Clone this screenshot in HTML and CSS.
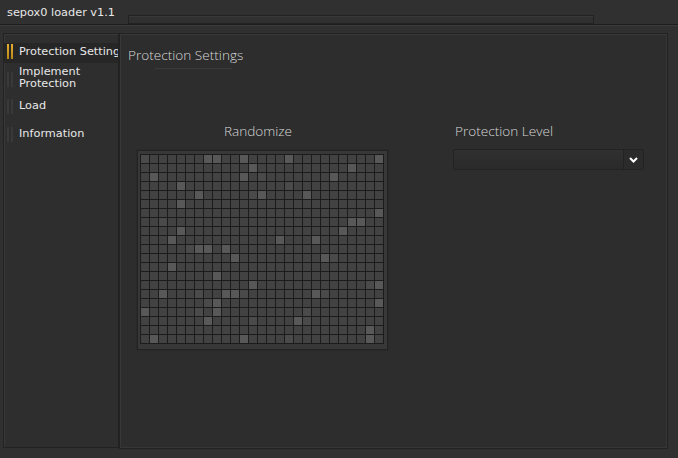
FILE: index.html
```html
<!DOCTYPE html>
<html>
<head>
<meta charset="utf-8">
<title>sepox0 loader v1.1</title>
<link rel="stylesheet" href="styles.css">
</head>
<body>
<div class="app">
  <header class="titlebar">
    <span class="title">sepox0 loader v1.1</span>
    <div class="title-groove"></div>
  </header>
  <div class="content">
    <nav class="sidebar">
      <div class="tab active"><span class="bars"><i></i><i></i></span><span class="tab-label">Protection Setting</span></div>
      <div class="tab tall"><span class="bars"><i></i><i></i></span><span class="tab-label">Implement Protection</span></div>
      <div class="tab"><span class="bars"><i></i><i></i></span><span class="tab-label">Load</span></div>
      <div class="tab"><span class="bars"><i></i><i></i></span><span class="tab-label">Information</span></div>
    </nav>
    <main class="panel">
      <h1 class="panel-title">Protection Settings</h1>
      <div class="panel-rule"></div>
      <div class="columns">
        <section class="randomize">
          <div class="label label-center">Randomize</div>
          <div class="grid-frame"><div class="grid" id="grid"></div></div>
        </section>
        <section class="level">
          <div class="label label-left">Protection Level</div>
          <div class="combo">
            <span class="combo-field"></span>
            <span class="combo-btn"><svg width="9" height="6" viewBox="0 0 9 6"><path d="M1 1 L4.5 4.5 L8 1" fill="none" stroke="#ffffff" stroke-width="2"/></svg></span>
          </div>
        </section>
      </div>
    </main>
  </div>
</div>
<script src="app.js"></script>
</body>
</html>
```

FILE: styles.css
```css
* { box-sizing: border-box; }
html, body { margin: 0; padding: 0; }
body {
  background: #303030;
  font-family: "DejaVu Sans", Verdana, sans-serif;
  font-size: 11.3px;
  color: #e8e8e8;
  overflow: hidden;
}
.app { display: flex; flex-direction: column; width: 678px; height: 458px; }

.titlebar {
  display: flex;
  align-items: flex-start;
  height: 26px;
  border-bottom: 1px solid #3a3a3a;
  box-shadow: inset 0 -1px 0 #1e1e1e;
}
.title { margin: 6px 0 0 7px; line-height: 14px; white-space: nowrap; }
.title-groove {
  margin: 15px 0 0 13px;
  width: 466px;
  height: 9px;
  border: 1px solid #222222;
  box-shadow: inset 0 1px 0 #383838;
}

.content { display: flex; padding: 7px 0 0 3px; }

.sidebar {
  width: 116px;
  height: 415px;
  background: #2e2e2e;
  border: 1px solid #222222;
  box-shadow: inset 1px 1px 0 #383838;
  padding-top: 9px;
  display: flex;
  flex-direction: column;
}
.tab { display: flex; align-items: center; padding-left: 3px; line-height: 16px; }
.tab + .tab { margin-top: 12px; }
.tab.tall { margin-top: 3px; line-height: 12px; }
.tab.tall + .tab { margin-top: 8px; }
.tab.tall .bars { align-self: flex-start; margin-top: 6px; }
.tab.active { background: #262626; padding-top: 1px; padding-bottom: 4px; line-height: 14px; }
.tab.active .tab-label { white-space: nowrap; overflow: hidden; }
.bars { display: flex; gap: 2px; flex: none; margin-right: 6px; }
.bars i { display: block; width: 2px; height: 15px; background: #393939; }
.tab.active .bars i { background: linear-gradient(#e6ad2e, #b98619); }
.tab-label { flex: 1; min-width: 0; }

.panel {
  width: 549px;
  height: 416px;
  background: #2d2d2d;
  border: 1px solid #222222;
  box-shadow: inset 1px 1px 0 #383838, inset -1px -1px 0 #363636;
  padding-left: 8px;
}
.panel-title {
  margin: 13px 0 0 0;
  font-family: "Open Sans", sans-serif;
  font-weight: 300;
  font-size: 13.6px;
  line-height: 16px;
  color: #d6d6d6;
}
.panel-rule { margin: 5px 0 0 27px; width: 77px; height: 1px; background: #3a3a3a; }

.columns { display: flex; align-items: flex-start; margin-top: 54px; padding-left: 9px; gap: 65px; }
.label {
  font-family: "Open Sans", sans-serif;
  font-weight: 300;
  font-size: 13.6px;
  line-height: 16px;
  color: #d6d6d6;
}
.label-center { text-align: center; padding-right: 9px; }
.label-left { padding-left: 2px; }

.randomize { width: 251px; }
.grid-frame {
  margin-top: 11px;
  width: 251px;
  height: 200px;
  border: 1px solid #222222;
  background: #383838;
  padding: 3px 3px 5px 2px;
  box-shadow: 0 0 0 1px #2a2a2a;
}
.grid {
  display: grid;
  grid-template-columns: repeat(27, 8px);
  grid-auto-rows: 8px;
  gap: 1px;
  padding: 1px;
  width: 244px;
  background: #1c1c1c;
}
.cell { background: #424242; }
.cell.mid { background: #4a4a4a; }
.cell.lit { background: #585858; }

.level { width: 191px; }
.combo {
  margin-top: 10px;
  display: flex;
  width: 191px;
  height: 21px;
  border: 1px solid #232323;
  border-radius: 2px;
  background: linear-gradient(#303030, #2a2a2a);
}
.combo-field { flex: 1; }
.combo-btn {
  width: 20px;
  border-left: 1px solid #222222;
  display: flex;
  align-items: center;
  justify-content: center;
  background: #2b2b2b;
}
```

FILE: app.js
```js
(function () {
  var lit = {
    0: { 0: 'mid', 7: 'lit', 8: 'lit', 11: 'lit', 16: 'lit', 26: 'lit' },
    1: { 12: 'lit', 23: 'lit' },
    2: { 1: 'lit', 11: 'lit', 13: 'mid', 21: 'lit' },
    3: { 4: 'lit', 16: 'mid' },
    4: { 6: 'lit', 12: 'mid', 13: 'lit', 18: 'lit' },
    5: { 4: 'lit' },
    6: { 26: 'lit' },
    7: { 2: 'mid', 23: 'lit', 24: 'lit' },
    8: { 4: 'lit', 22: 'lit' },
    9: { 3: 'lit', 15: 'lit', 19: 'lit' },
    10: { 5: 'mid', 6: 'lit', 7: 'lit', 9: 'lit' },
    11: { 10: 'lit', 20: 'lit', 21: 'mid' },
    12: { 3: 'lit' },
    13: { 8: 'lit' },
    14: { 12: 'lit', 25: 'mid', 26: 'lit' },
    15: { 2: 'lit', 6: 'mid', 9: 'lit', 10: 'lit', 11: 'mid', 19: 'lit', 20: 'mid' },
    16: { 7: 'mid', 8: 'lit', 26: 'lit' },
    17: { 0: 'lit', 6: 'mid', 8: 'lit', 18: 'mid' },
    18: { 7: 'lit', 12: 'mid', 17: 'lit', 18: 'mid' },
    19: { 25: 'lit' },
    20: { 1: 'lit', 11: 'lit', 16: 'mid', 25: 'lit' }
  };
  var grid = document.getElementById('grid');
  var frag = document.createDocumentFragment();
  for (var r = 0; r < 21; r++) {
    for (var c = 0; c < 27; c++) {
      var d = document.createElement('div');
      var k = lit[r] && lit[r][c];
      d.className = k ? 'cell ' + k : 'cell';
      frag.appendChild(d);
    }
  }
  grid.appendChild(frag);
})();
```
